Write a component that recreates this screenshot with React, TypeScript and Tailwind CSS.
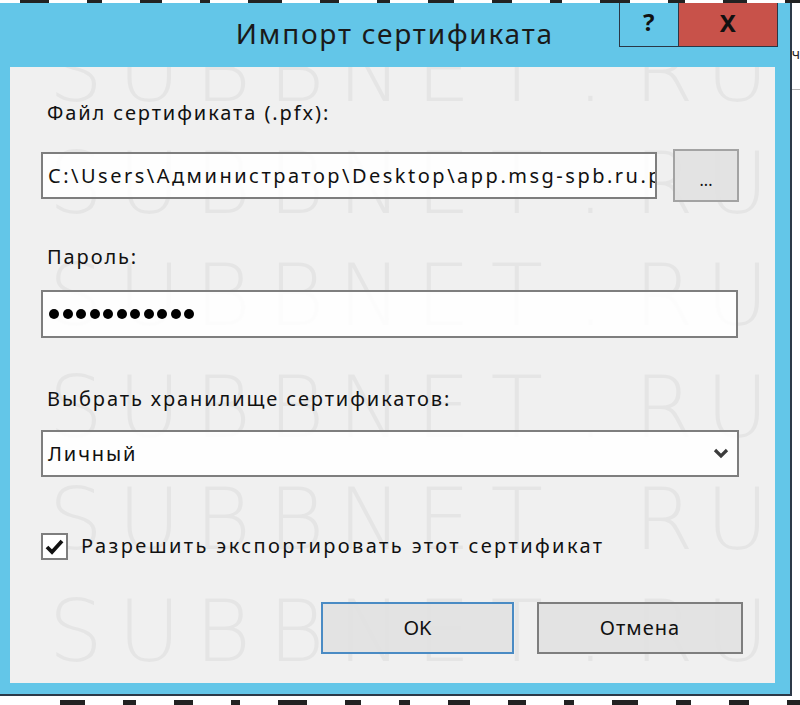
import React from 'react';

const WATERMARK = ['S', 'U', 'B', 'B', 'N', 'E', 'T', '.', 'R', 'U'];

// faint site watermark, only visible over the client area
const Watermark = () => (
  <div className="pointer-events-none absolute inset-0 overflow-hidden">
    <div className="mt-[-52px] flex flex-col pl-[30px] font-['DejaVu_Sans',sans-serif] font-extralight text-[86px] leading-[112px] text-black/[0.045]">
      {[0, 1, 2, 3, 4, 5].map((row) => (
        <div key={row} className="flex h-[112px]">
          {WATERMARK.map((ch, i) => (
            <span key={i} className="w-[75px] text-center">
              {ch}
            </span>
          ))}
        </div>
      ))}
    </div>
  </div>
);

const Dashes = ({ className }: { className: string }) => (
  <div className={`flex gap-[38px] ${className}`}>
    {[34, 18, 26, 12, 40, 22, 16, 30, 24, 14, 36, 20, 28, 18].map((w, i) => (
      <span key={i} className="h-full bg-[#222]" style={{ width: w }} />
    ))}
  </div>
);

export default function App() {
  return (
    <div className="relative h-[705px] w-[800px] overflow-hidden bg-white font-['Noto_Sans',sans-serif] text-[#111]">
      {/* background window text peeking above */}
      <Dashes className="h-[3px] pl-[20px]" />

      <div className="flex">
        {/* dialog frame */}
        <div className="flex h-[693px] w-[793px] flex-col border-r-2 border-b-2 border-[#2c3a48] bg-[#63c6e8]">
          {/* title bar */}
          <div className="relative flex h-[64px] items-center justify-center">
            <span className="pb-[4px] text-[28px] tracking-[1.8px] text-[#1a1a1a]">Импорт сертификата</span>
            <div className="absolute right-[12px] top-0 flex h-[44px] border border-t-0 border-[#2a3746]">
              <button className="flex w-[59px] items-center justify-center border-r border-[#2a3746] bg-[#63c6e8] pb-[6px] text-[24px] font-bold text-[#111]">
                ?
              </button>
              <button className="flex w-[98px] items-center justify-center bg-[#c8524a] pb-[4px] text-[24px] font-bold text-[#111]">
                X
              </button>
            </div>
          </div>

          {/* client area */}
          <div className="relative ml-[10px] flex h-[616px] w-[765px] flex-col bg-[#f0f0f0] pl-[31px] text-[20px] tracking-[1.9px]">
            <Watermark />
            <label className="relative ml-[6px] mt-[32px] leading-[28px]">Файл сертификата (.pfx):</label>
            <div className="relative mt-[22px] flex items-center gap-[16px]">
              <div className="flex h-[47px] w-[616px] items-center overflow-hidden whitespace-nowrap border-2 border-[#7e7e7e] bg-white/90 pl-[5px] tracking-[2.5px]">
                C:\Users\Администратор\Desktop\app.msg-spb.ru.pfx
              </div>
              <button className="flex h-[53px] w-[66px] items-end justify-center border-2 border-[#a3a3a3] bg-[#e1e1e1]/90 pb-[12px] text-[16px] leading-none tracking-normal">
                ...
              </button>
            </div>

            <label className="relative ml-[6px] mt-[41px] leading-[28px]">Пароль:</label>
            <div className="relative mt-[19px] flex h-[48px] w-[697px] items-center gap-[3.5px] border-2 border-[#7e7e7e] bg-white/90 pl-[6px]">
              {Array.from({ length: 11 }).map((_, i) => (
                <span key={i} className="h-[10px] w-[10px] rounded-full bg-black" />
              ))}
            </div>

            <label className="relative ml-[6px] mt-[47px] leading-[28px]">Выбрать хранилище сертификатов:</label>
            <div className="relative mt-[17px] flex h-[47px] w-[698px] items-center justify-between border-2 border-[#7e7e7e] bg-white/90 pl-[5px] pr-[8px]">
              <span>Личный</span>
              <svg width="16" height="11" viewBox="0 0 16 11">
                <polyline points="2,2 8,8 14,2" fill="none" stroke="#3c3c3c" strokeWidth="3.2" />
              </svg>
            </div>

            <label className="relative mt-[55px] flex items-center gap-[13px]">
              <span className="flex h-[27px] w-[27px] items-center justify-center border-2 border-[#7e7e7e] bg-white">
                <svg width="19" height="17" viewBox="0 0 19 17">
                  <path d="M2 9 L7 14 L17 3" fill="none" stroke="#111" strokeWidth="3.8" />
                </svg>
              </span>
              <span className="leading-[28px] tracking-[2.4px]">Разрешить экспортировать этот сертификат</span>
            </label>

            <div className="relative mt-[42px] flex justify-end gap-[23px] pr-[32px] tracking-normal">
              <button className="h-[52px] w-[193px] border-2 border-[#4a8bc4] bg-[#e1e1e1]/90">OK</button>
              <button className="h-[52px] w-[206px] border-2 border-[#7e7e7e] bg-[#e1e1e1]/90 tracking-[1px]">Отмена</button>
            </div>
          </div>
        </div>

        {/* sliver of window behind, on the right */}
        <div className="flex flex-1 flex-col pt-[44px]">
          <span className="text-[14px] leading-none text-[#222]">ч</span>
          <span className="mt-[28px] h-px bg-[#bbb]" />
        </div>
      </div>

      {/* background window text peeking below */}
      <Dashes className="mt-[4px] h-[5px] pl-[60px]" />
    </div>
  );
}
